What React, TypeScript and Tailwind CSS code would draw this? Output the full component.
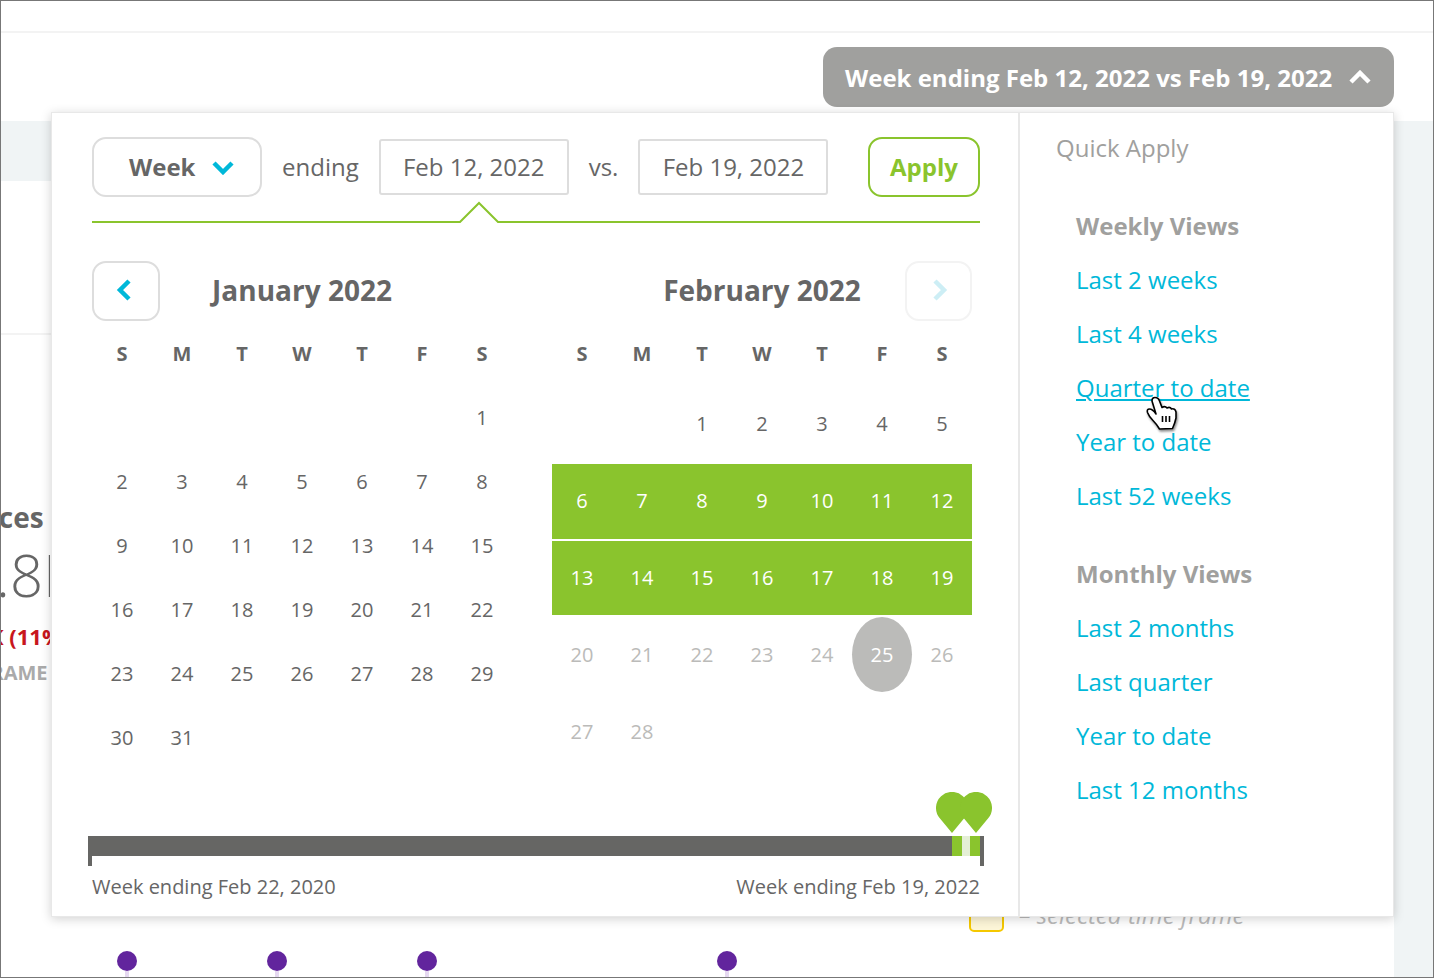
const WEEKDAYS = ["S", "M", "T", "W", "T", "F", "S"];

const JANUARY: (number | null)[][] = [
  [null, null, null, null, null, null, 1],
  [2, 3, 4, 5, 6, 7, 8],
  [9, 10, 11, 12, 13, 14, 15],
  [16, 17, 18, 19, 20, 21, 22],
  [23, 24, 25, 26, 27, 28, 29],
  [30, 31, null, null, null, null, null],
];

const FEBRUARY: (number | null)[][] = [
  [null, null, 1, 2, 3, 4, 5],
  [6, 7, 8, 9, 10, 11, 12],
  [13, 14, 15, 16, 17, 18, 19],
  [20, 21, 22, 23, 24, 25, 26],
  [27, 28, null, null, null, null, null],
];

// row classes for February, the two selected weeks are the green band
const FEB_ROWS = [
  "h-[75px] pb-[2px] text-[#666]",
  "h-[75px] pb-[2px] bg-[#8ac42d] text-white",
  "h-[74px] bg-[#8ac42d] text-white",
  "h-[75px] text-[#bbbbb9]",
  "h-[75px] text-[#bbbbb9]",
];

const WEEKLY = ["Last 2 weeks", "Last 4 weeks", "Quarter to date", "Year to date", "Last 52 weeks"];
const MONTHLY = ["Last 2 months", "Last quarter", "Year to date", "Last 12 months"];

function Weekdays() {
  return (
    <div className="grid h-[65px] grid-cols-7 items-center text-center text-[20px] font-bold text-[#666]">
      {WEEKDAYS.map((d, i) => (
        <span key={i}>{d}</span>
      ))}
    </div>
  );
}

function January() {
  return (
    <div className="w-[420px]">
      <div className="grid h-[60px] grid-cols-[68px_1fr_68px] items-center">
        <button className="flex h-[60px] w-[68px] items-center justify-center rounded-[14px] border-2 border-[#ddd] text-[#00b8d9]">
          <svg className="mb-[2px] mr-[5px] h-[22px] w-[16px]" viewBox="0 0 16 22" fill="none" stroke="currentColor" strokeWidth="4.5">
            <polyline points="13,2 4,11 13,20" />
          </svg>
        </button>
        <h2 className="pb-[2px] text-center text-[28px] font-bold text-[#666]">January 2022</h2>
      </div>
      <Weekdays />
      {JANUARY.map((row, r) => (
        <div key={r} className="grid h-[64px] grid-cols-7 items-center text-center text-[20px] text-[#666]">
          {row.map((d, i) => (
            <span key={i}>{d}</span>
          ))}
        </div>
      ))}
    </div>
  );
}

function February() {
  return (
    <div className="w-[420px]">
      <div className="grid h-[60px] grid-cols-[67px_1fr_67px] items-center">
        <span />
        <h2 className="pb-[2px] text-center text-[28px] font-bold text-[#666]">February 2022</h2>
        <button className="flex h-[60px] w-[67px] items-center justify-center rounded-[14px] border-2 border-[#f3f3f3] text-[#cdeef5]">
          <svg className="mb-[2px] ml-[3px] h-[22px] w-[16px]" viewBox="0 0 16 22" fill="none" stroke="currentColor" strokeWidth="4.5">
            <polyline points="3,2 12,11 3,20" />
          </svg>
        </button>
      </div>
      <Weekdays />
      <div className="mt-px flex flex-col gap-[2px]">
        {FEBRUARY.map((row, r) => (
          <div key={r} className={`grid grid-cols-7 items-center text-center text-[20px] ${FEB_ROWS[r]}`}>
            {row.map((d, i) =>
              d === 25 ? (
                <span key={i} className="flex h-[75px] items-center justify-center rounded-[50%] bg-[#bbbbb9] text-white">
                  {d}
                </span>
              ) : (
                <span key={i}>{d}</span>
              ),
            )}
          </div>
        ))}
      </div>
    </div>
  );
}

function Pin({ className }: { className: string }) {
  return (
    <svg className={className} viewBox="0 0 32 41" fill="#8ac42d">
      <path d="M16 41 L3.6 26 A16 16 0 1 1 28.4 26 Z" />
    </svg>
  );
}

function Slider() {
  return (
    <div className="relative -mx-[4px] mt-[66px] flex h-[20px] items-start">
      <div className="h-[20px] flex-1 bg-[#666664]" />
      <div className="h-[20px] w-[10px] bg-[#8ac42d]" />
      <div className="h-[20px] w-[8px] bg-[#e4efd5]" />
      <div className="h-[20px] w-[10px] bg-[#8ac42d]" />
      <div className="h-[30px] w-[4px] bg-[#666664]" />
      <div className="absolute left-0 top-[20px] h-[10px] w-[4px] bg-[#666664]" />
      <Pin className="absolute left-[848px] top-[-44px] h-[41px] w-[32px]" />
      <Pin className="absolute left-[872px] top-[-44px] h-[41px] w-[32px]" />
    </div>
  );
}

function Cursor() {
  return (
    <svg
      className="absolute left-[69px] top-[35px] h-[36px] w-[34px] drop-shadow-[1px_2px_1px_rgba(0,0,0,0.45)]"
      viewBox="0 0 34 36"
      fill="#fff"
      stroke="#000"
      strokeWidth="1.6"
      strokeLinejoin="round"
    >
      <path d="M7 5 Q7 1.500 10 1.500 Q13.500 1.500 14.500 5 L17 11.500 Q20 9.500 22 12 Q25 10.500 26.500 13 Q30 12 31 16 L31 22 Q30 27 27.500 32.500 L14.500 33 Q11.500 28 8 24.500 Q4 20.500 2.500 16.500 Q1.500 13 4.500 13 Q7.500 13 11 18 Z" />
      <path d="M17.500 20 V26 M21 20 V26 M24.500 20 V26" fill="none" />
    </svg>
  );
}

function LinkList({ title, links }: { title: string; links: string[] }) {
  return (
    <div className="flex flex-col text-[24px] leading-[54px]">
      <h3 className="font-bold text-[#a0a09e]">{title}</h3>
      {links.map((l) =>
        l === "Quarter to date" ? (
          <div key={l} className="relative">
            <a className="text-[#00b8d9] underline">{l}</a>
            <Cursor />
          </div>
        ) : (
          <a key={l} className="text-[#00b8d9]">
            {l}
          </a>
        ),
      )}
    </div>
  );
}

function Popover() {
  return (
    <div className="absolute left-[50px] top-[111px] flex h-[805px] w-[1343px] border border-[#e8e8e8] bg-white shadow-[0_2px_10px_rgba(0,0,0,0.18)]">
      <div className="w-[968px] shrink-0 border-r-2 border-[#e8e8e8] pl-[40px] pr-[38px] pt-[24px]">
        <div className="flex h-[60px] items-center text-[24px] text-[#666]">
          <button className="flex h-[60px] w-[170px] shrink-0 items-center gap-[17px] rounded-[14px] border-2 border-[#ddd] pl-[35px] font-bold">
            Week
            <svg className="h-[15px] w-[22px] text-[#00b8d9]" viewBox="0 0 22 15" fill="none" stroke="currentColor" strokeWidth="4.5">
              <polyline points="2,3 11,12 20,3" />
            </svg>
          </button>
          <span className="ml-[20px]">ending</span>
          <div className="ml-[20px] flex h-[56px] w-[190px] shrink-0 items-center justify-center rounded-[3px] border-2 border-[#ddd]">Feb 12, 2022</div>
          <span className="ml-[20px]">vs.</span>
          <div className="ml-[20px] flex h-[56px] w-[190px] shrink-0 items-center justify-center rounded-[3px] border-2 border-[#ddd]">Feb 19, 2022</div>
          <button className="ml-auto h-[60px] w-[112px] shrink-0 rounded-[14px] border-2 border-[#8ac42d] font-bold text-[#8ac42d]">Apply</button>
        </div>
        <svg className="mt-[3px] block h-[24px] w-[888px]" viewBox="0 0 888 24" fill="none" stroke="#8ac42d" strokeWidth="2">
          <polyline points="0,22 368,22 387,3 406,22 888,22" />
        </svg>
        <div className="mt-[37px] flex gap-[40px]">
          <January />
          <February />
        </div>
        <Slider />
        <div className="mt-[17px] flex justify-between text-[20px] leading-[27px] text-[#666]">
          <span>Week ending Feb 22, 2020</span>
          <span>Week ending Feb 19, 2022</span>
        </div>
      </div>
      <div className="flex-1 pl-[36px] pt-[19px]">
        <h2 className="text-[24px] leading-[32px] text-[#a0a09e]">Quick Apply</h2>
        <div className="mt-[35px] flex flex-col gap-[24px] pl-[20px]">
          <LinkList title="Weekly Views" links={WEEKLY} />
          <LinkList title="Monthly Views" links={MONTHLY} />
        </div>
      </div>
    </div>
  );
}

export default function App() {
  return (
    <div className="relative flex h-[978px] w-[1434px] flex-col overflow-hidden border border-[#777] bg-white font-['Open_Sans',sans-serif]">
      <div className="h-[32px] shrink-0 border-b-2 border-[#f3f3f3]" />
      <div className="flex h-[88px] shrink-0 justify-end pr-[39px] pt-[14px]">
        <button className="flex h-[60px] w-[571px] items-center gap-[17px] rounded-[14px] bg-[#a0a09e] pl-[22px] text-[24px] font-bold text-white">
          <span className="pt-[2px]">Week ending Feb 12, 2022 vs Feb 19, 2022</span>
          <svg className="h-[14px] w-[22px]" viewBox="0 0 22 14" fill="none" stroke="currentColor" strokeWidth="4.5">
            <polyline points="2,12 11,3 20,12" />
          </svg>
        </button>
      </div>
      <main className="flex min-h-0 flex-1 flex-col bg-[#f0f4f5] pr-[39px] pt-[60px]">
        <div className="flex flex-1 flex-col bg-white">
          <div className="h-[154px] shrink-0 border-b-2 border-[#f3f3f3]" />
          <div className="mt-[163px] flex w-[49px] flex-col overflow-hidden whitespace-nowrap">
            <div className="ml-[-41px] text-[28px] font-bold leading-[38px] text-[#666]">Prices</div>
            <div className="ml-[-38px] mt-[7px] text-[58px] font-light leading-[64px] text-[#666]">1.8M</div>
            <div className="ml-[-12px] mt-[14px] text-[22px] font-bold leading-[30px] text-[#c8161d]">K (11%)</div>
            <div className="ml-[-75px] mt-[8px] text-[20px] font-bold leading-[27px] text-[#aaa]">TIME FRAME</div>
          </div>
          <div className="mt-auto flex items-center gap-[15px] pl-[968px] text-[24px] italic text-[#bbb]">
            <div className="h-[34px] w-[35px] rounded-[5px] border-2 border-[#f5c800] bg-[#fdf6d8]" />
            <span>– selected time frame</span>
          </div>
          <div className="mt-[18px] flex h-[26px] pl-[116px]">
            {[true, true, true, false, true].map((on, i) => (
              <div key={i} className="w-[150px]">
                {on && (
                  <div className="flex w-[20px] flex-col items-center">
                    <div className="h-[20px] w-[20px] rounded-full bg-[#62259d]" />
                    <div className="h-[6px] w-[4px] bg-[#e5d8f0]" />
                  </div>
                )}
              </div>
            ))}
          </div>
        </div>
      </main>
      <Popover />
    </div>
  );
}
